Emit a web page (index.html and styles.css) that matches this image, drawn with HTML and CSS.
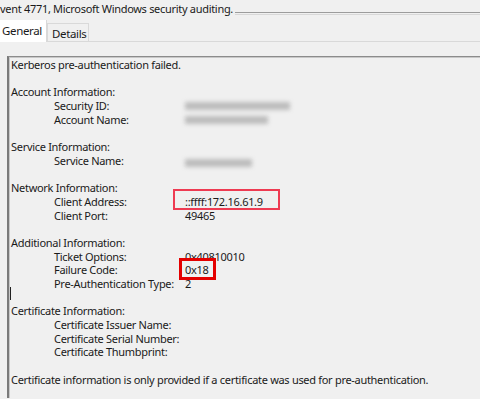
FILE: index.html
```html
<!DOCTYPE html>
<html lang="en">
<head>
    <meta charset="UTF-8">
    <title>Event 4771 Properties</title>
    <link rel="stylesheet" href="styles.css">
</head>
<body>
    <div class="title-row">
        <span class="title">vent 4771, Microsoft Windows security auditing.</span>
        <span class="rule"></span>
    </div>

    <div class="tabs">
        <div class="tab active">General</div>
        <div class="tab">Details</div>
        <div class="tab-fill"></div>
    </div>

    <div class="panel">
        <div class="box">
            <div class="line">Kerberos pre-authentication failed.</div>
            <div class="line"></div>
            <div class="line">Account Information:</div>
            <div class="line sub"><span>Security ID:</span><span class="blur w105"></span></div>
            <div class="line sub"><span>Account Name:</span><span class="blur w83"></span></div>
            <div class="line"></div>
            <div class="line">Service Information:</div>
            <div class="line sub"><span>Service Name:</span><span class="blur w67 low"></span></div>
            <div class="line"></div>
            <div class="line">Network Information:</div>
            <div class="line sub"><span>Client Address:</span><span class="val"><span class="mark pink">::ffff:172.16.61.9</span></span></div>
            <div class="line sub"><span>Client Port:</span><span class="val">49465</span></div>
            <div class="line"></div>
            <div class="line">Additional Information:</div>
            <div class="line sub"><span>Ticket Options:</span><span class="val">0x40810010</span></div>
            <div class="line sub"><span>Failure Code:</span><span class="val"><span class="mark red">0x18</span></span></div>
            <div class="line sub"><span>Pre-Authentication Type:</span><span class="val">2</span></div>
            <div class="line"><span class="caret"></span></div>
            <div class="line">Certificate Information:</div>
            <div class="line sub"><span>Certificate Issuer Name:</span></div>
            <div class="line sub"><span>Certificate Serial Number:</span></div>
            <div class="line sub"><span>Certificate Thumbprint:</span></div>
            <div class="line"></div>
            <div class="line">Certificate information is only provided if a certificate was used for pre-authentication.</div>
        </div>
    </div>
</body>
</html>
```

FILE: styles.css
```css
body {
    margin: 0;
    background: #f0f0f0;
    font-family: 'Noto Sans', 'Open Sans', sans-serif;
    color: #1a1a1a;
    overflow: hidden;
    height: 399px;
}

.title-row {
    display: flex;
    align-items: flex-end;
    height: 15px;
}

.title {
    font-size: 11px;
    letter-spacing: -0.3px;
    line-height: 12px;
    margin-top: -3px;
    white-space: nowrap;
    padding-right: 2px;
}

.rule {
    flex: 1;
    height: 1px;
    border-top: 1px solid #9c9c9c;
    border-bottom: 1px solid #d8d8d8;
}

.tabs {
    display: flex;
    align-items: flex-end;
    margin-top: 5px;
    height: 22px;
}

.tab {
    font-size: 11.5px;
    letter-spacing: -0.35px;
    height: 19px;
    line-height: 19px;
    padding: 0 2px 0 4px;
    border: 1px solid #d9d9d9;
    background: #f0f0f0;
    box-sizing: border-box;
}

.tab.active {
    background: #fff;
    height: 22px;
    line-height: 21px;
    padding: 0 4px 0 2px;
    border-left: none;
    border-top: none;
    border-bottom: none;
}

.tab-fill {
    flex: 1;
    border-bottom: 1px solid #d9d9d9;
}

.panel {
    padding: 14px 0 0 7px;
}

.box {
    border-top: 1px solid #8c8c8c;
    border-left: 2px solid #7a7a7a;
    box-shadow: inset 1px 1px 0 #c8c8c8;
    padding: 1px 0 0 2px;
    height: 340px;
    font-size: 11px;
    letter-spacing: -0.3px;
    line-height: 13.7px;
}

.line {
    height: 13.7px;
    white-space: nowrap;
}

.line.sub {
    display: grid;
    grid-template-columns: 131px auto;
    padding-left: 43px;
}

.val {
    position: relative;
}

.blur {
    display: inline-block;
    height: 8px;
    margin-top: 3px;
    background: #b4b4b4;
    filter: blur(2px);
    opacity: 0.85;
}

.blur.low {
    margin-top: 5px;
}

.w105 { width: 105px; }
.w83 { width: 83px; }
.w67 { width: 67px; }

.mark {
    position: relative;
}

.mark::after {
    content: '';
    position: absolute;
}

.mark.pink::after {
    left: -12px;
    top: -5px;
    width: 103px;
    height: 17px;
    border: 2px solid #ee3b52;
}

.mark.red::after {
    left: -6px;
    top: -4px;
    width: 31px;
    height: 16px;
    border: 3px solid #e40000;
}

.caret {
    display: inline-block;
    width: 1px;
    height: 13px;
    background: #222;
    margin-left: -1px;
    vertical-align: top;
    margin-top: -4px;
}
```
